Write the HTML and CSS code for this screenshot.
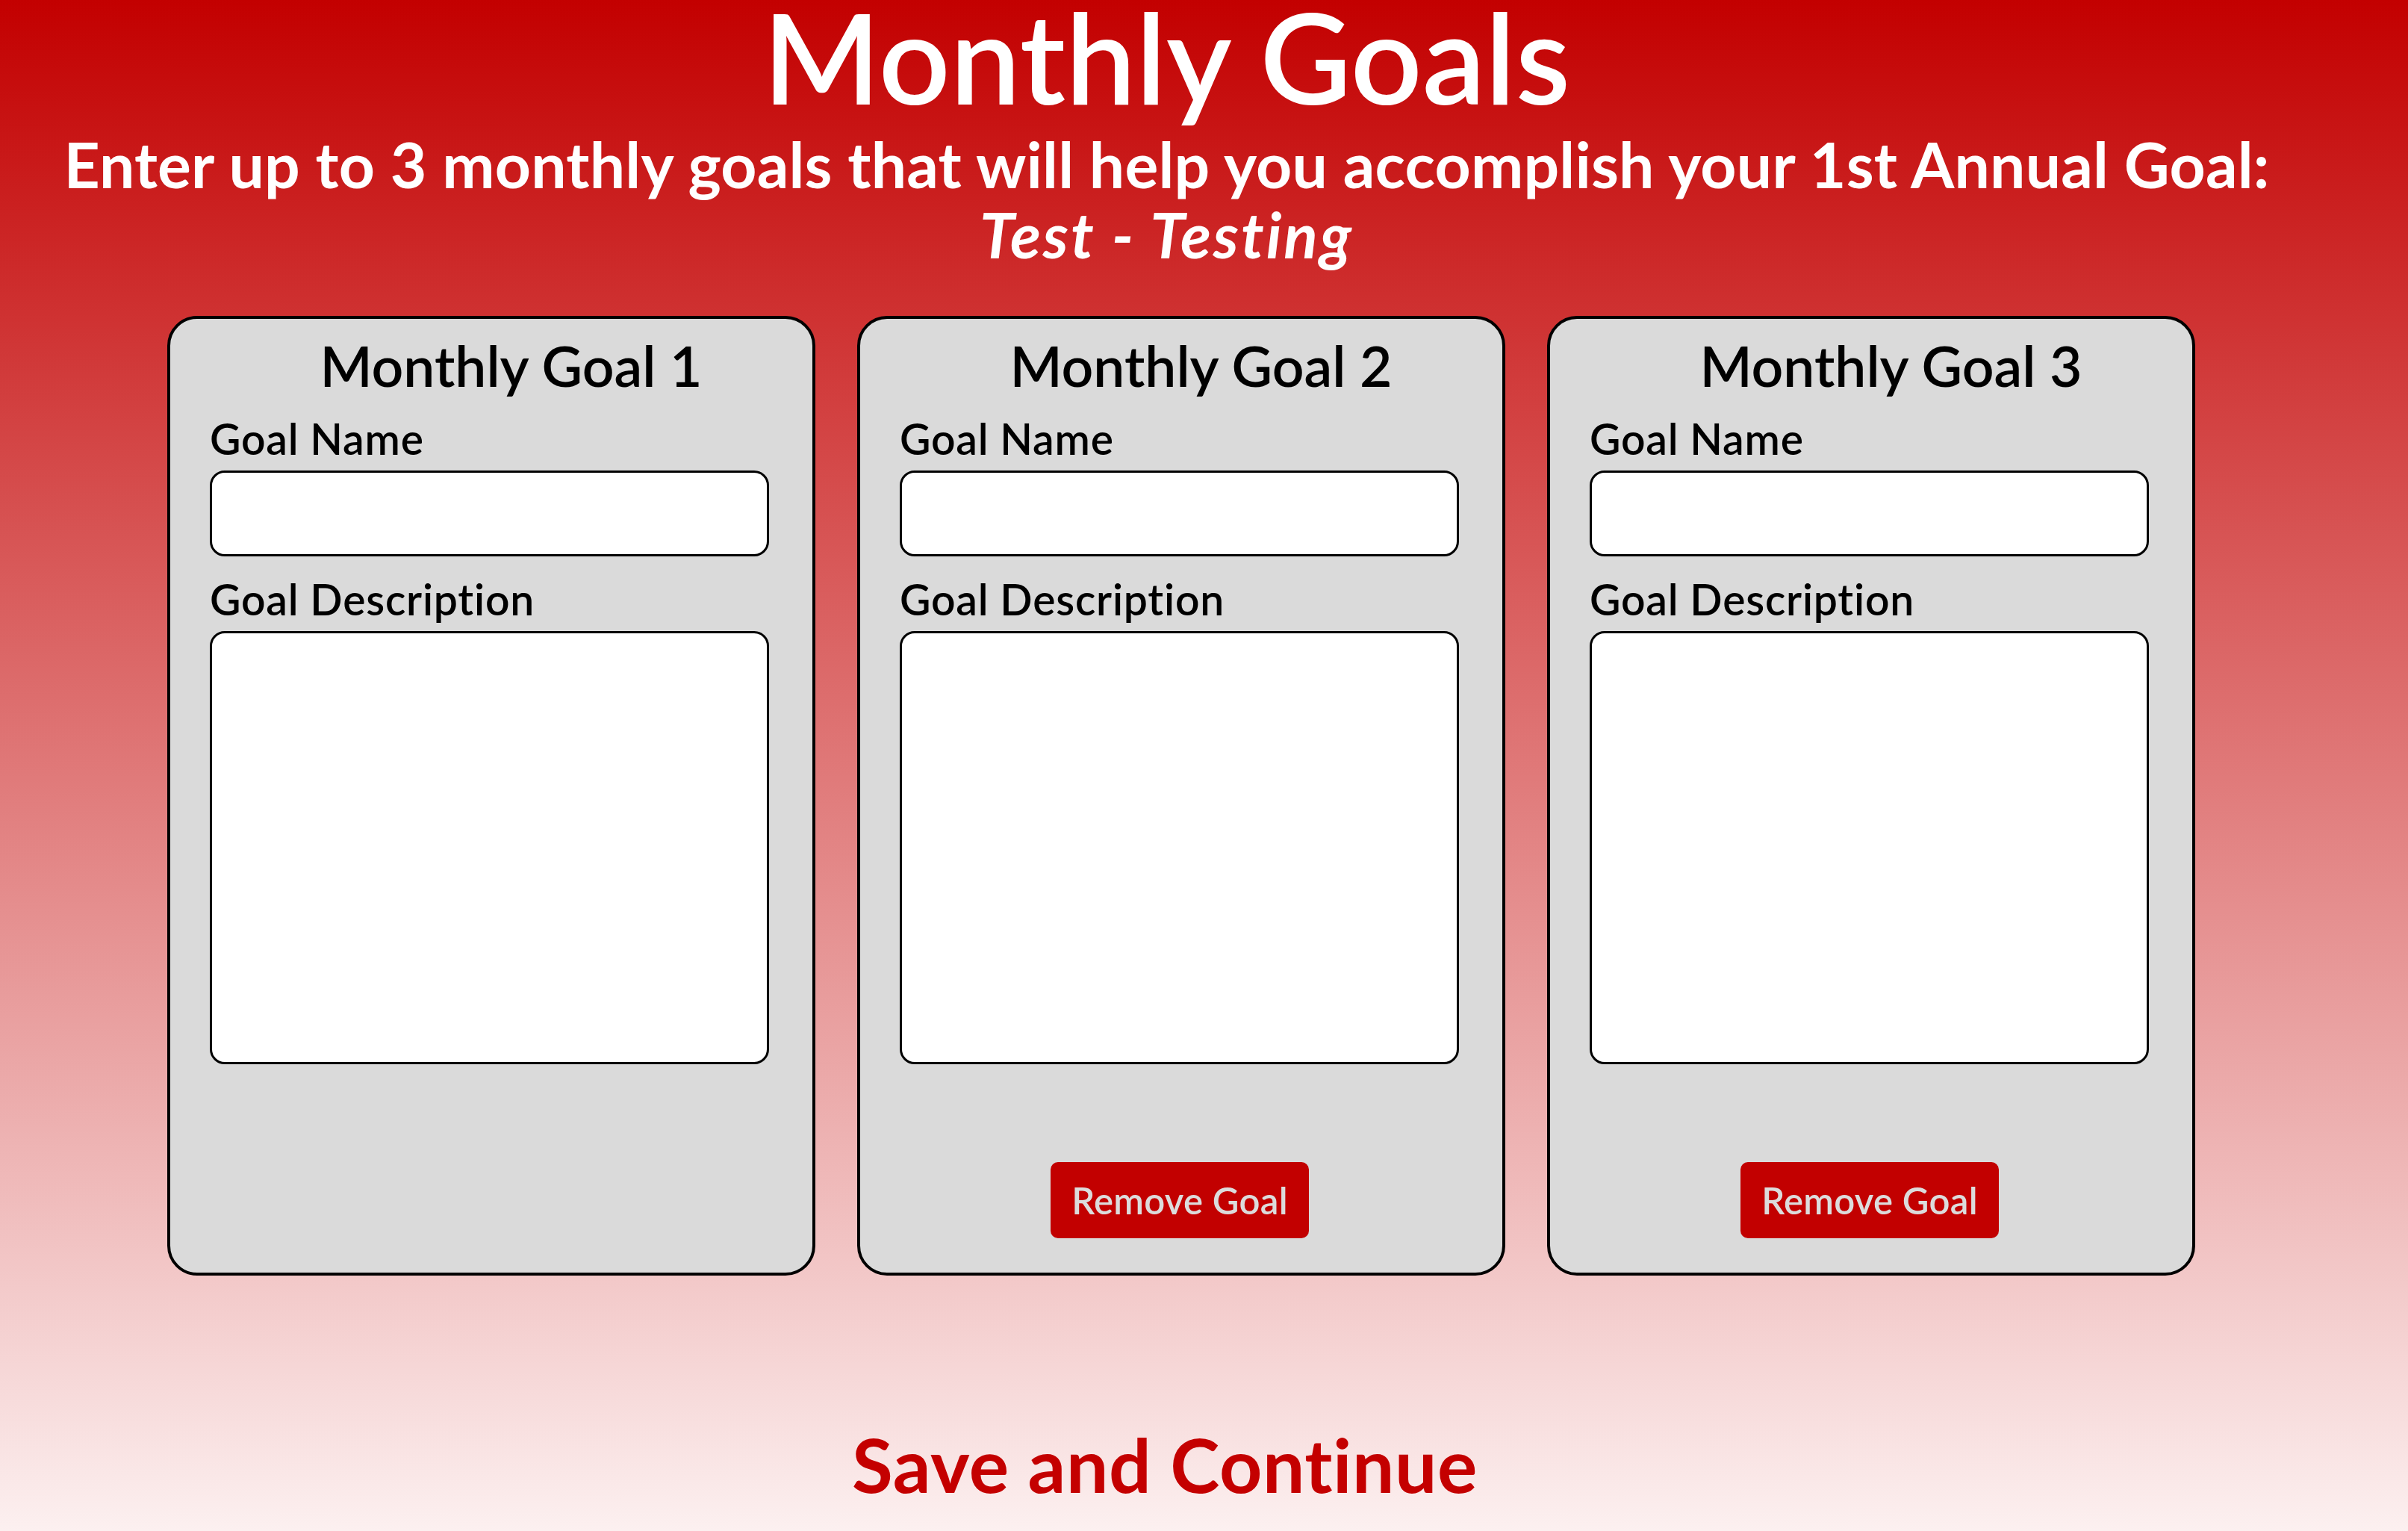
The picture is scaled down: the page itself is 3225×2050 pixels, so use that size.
FILE: index.html
```html
<!DOCTYPE html>
<html lang="en">
<head>
<meta charset="utf-8">
<title>Monthly Goals</title>
<link rel="stylesheet" href="styles.css">
</head>
<body>
<header class="header">
  <h1 class="title">Monthly Goals</h1>
  <p class="subtitle">Enter up to 3 monthly goals that will help you accomplish your 1st Annual Goal:<br><em class="annual">Test - Testing</em></p>
</header>
<main class="cards">
  <section class="card">
    <h2 class="card-title">Monthly Goal 1</h2>
    <label class="label">Goal Name</label>
    <input class="field" type="text">
    <label class="label">Goal Description</label>
    <textarea class="area"></textarea>
  </section>
  <section class="card">
    <h2 class="card-title">Monthly Goal 2</h2>
    <label class="label">Goal Name</label>
    <input class="field" type="text">
    <label class="label">Goal Description</label>
    <textarea class="area"></textarea>
    <button class="remove" type="button">Remove Goal</button>
  </section>
  <section class="card">
    <h2 class="card-title">Monthly Goal 3</h2>
    <label class="label">Goal Name</label>
    <input class="field" type="text">
    <label class="label">Goal Description</label>
    <textarea class="area"></textarea>
    <button class="remove" type="button">Remove Goal</button>
  </section>
</main>
<footer class="footer">
  <a class="save" href="#">Save and Continue</a>
</footer>
</body>
</html>
```
FILE: styles.css
```css
html, body {
  margin: 0;
  padding: 0;
}
body {
  min-height: 2050px;
  background: linear-gradient(to bottom, #c30000 0%, #fcf0f0 100%);
  font-family: "Lato", "Open Sans", sans-serif;
  display: flex;
  flex-direction: column;
}
.header {
  padding-right: 100px;
  text-align: center;
  color: #ffffff;
}
.title {
  margin: 0;
  font-size: 168px;
  line-height: 150px;
  font-weight: 600;
}
.subtitle {
  margin: 23px 0 0;
  font-size: 84px;
  line-height: 94px;
  font-weight: 700;
  letter-spacing: 0.2px;
}
.annual {
  font-style: italic;
  letter-spacing: 3px;
}
.cards {
  display: flex;
  gap: 56px;
  padding-left: 224px;
  margin-top: 62px;
}
.card {
  box-sizing: border-box;
  width: 868px;
  height: 1285px;
  background: #dadada;
  border: 4px solid #000;
  border-radius: 40px;
  padding: 17px 0 0 53px;
  display: flex;
  flex-direction: column;
  align-items: flex-start;
}
.card-title {
  align-self: stretch;
  margin: 0;
  text-align: center;
  font-size: 75px;
  line-height: 90px;
  font-weight: 600;
  color: #000;
}
.label {
  margin-top: 20px;
  font-size: 57px;
  line-height: 66px;
  font-weight: 600;
  letter-spacing: 0.8px;
  color: #000;
}
.label + .field, .label + .area {
  margin-top: 10px;
}
.field, .area {
  box-sizing: border-box;
  width: 749px;
  background: #fff;
  border: 3px solid #000;
  border-radius: 20px;
  display: block;
  resize: none;
  outline: none;
}
.field {
  height: 115px;
}
.area {
  height: 580px;
}
.field + .label {
  margin-top: 24px;
}
.remove {
  align-self: flex-start;
  margin: 131px 0 0 202px;
  width: 346px;
  height: 102px;
  background: #c20000;
  color: #dcdcdc;
  border: none;
  border-radius: 10px;
  font-family: "Lato", "Open Sans", sans-serif;
  font-size: 49px;
  font-weight: 600;
  letter-spacing: 0.3px;
  padding: 0;
}
.footer {
  padding-right: 105px;
  margin-top: 192px;
  text-align: center;
}
.save {
  font-size: 100px;
  line-height: 120px;
  font-weight: 700;
  letter-spacing: 0.6px;
  color: #c40000;
  text-decoration: none;
  display: inline-block;
}
```
